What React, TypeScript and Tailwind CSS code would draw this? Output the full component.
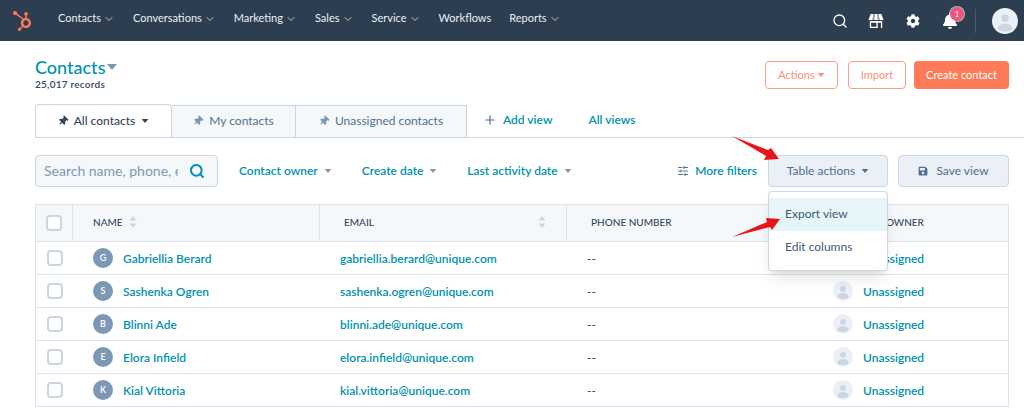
import { ChevronDown, Plus, Search, SlidersHorizontal } from 'lucide-react';
import { FaBell, FaCog, FaHubspot, FaSave, FaThumbtack } from 'react-icons/fa';

const navItems = [
  { label: 'Contacts', menu: true },
  { label: 'Conversations', menu: true },
  { label: 'Marketing', menu: true },
  { label: 'Sales', menu: true },
  { label: 'Service', menu: true },
  { label: 'Workflows', menu: false },
  { label: 'Reports', menu: true },
];

const contacts = [
  { name: 'Gabriellia Berard', email: 'gabriellia.berard@unique.com' },
  { name: 'Sashenka Ogren', email: 'sashenka.ogren@unique.com' },
  { name: 'Blinni Ade', email: 'blinni.ade@unique.com' },
  { name: 'Elora Infield', email: 'elora.infield@unique.com' },
  { name: 'Kial Vittoria', email: 'kial.vittoria@unique.com' },
];

function Caret({ className }: { className: string }) {
  return (
    <svg viewBox="0 0 10 6" className={className} fill="currentColor">
      <path d="M0 0h10L5 6z" />
    </svg>
  );
}

function SortArrows() {
  return (
    <svg viewBox="0 0 8 14" className="h-3.5 w-2 text-[#cbd6e2]" fill="currentColor">
      <path d="M4 1l3.500 4.500h-7zM4 13L.5 8.500h7z" />
    </svg>
  );
}

function UserAvatar({ className }: { className: string }) {
  return (
    <svg viewBox="0 0 24 24" className={className}>
      <circle cx="12" cy="12" r="12" fill="#eaf0f6" />
      <circle cx="12" cy="9.500" r="3.500" fill="#cbd6e2" />
      <path d="M5 19.500c.6-3.600 3.400-5 7-5s6.400 1.400 7 5a12 12 0 0 1-14 0z" fill="#cbd6e2" />
    </svg>
  );
}

function StoreIcon() {
  return (
    <svg viewBox="0 0 18 18" className="size-4 text-white" fill="currentColor">
      <path d="M3 1h3L5 8H.5zM7.500 1h3l.5 7H7zM12 1h3l2.500 7H13z" />
      <path d="M6 1h1.500L7 8H5zM10.500 1H12l1 7h-2z" opacity="0.5" />
      <path d="M2 9h14v8H2zM3.500 11v4.500h6V11zM11 11v6h3.500v-6z" fillRule="evenodd" />
    </svg>
  );
}

function Checkbox() {
  return <div className="size-4 rounded-sm border-2 border-[#cbd6e2] bg-white" />;
}

function Tab({ label, className }: { label: string; className: string }) {
  return (
    <div className={`flex h-8 items-center justify-center gap-1.5 border-r border-t border-[#cbd6e2] bg-[#f5f8fa] pb-0.5 text-[#516f90] ${className}`}>
      <FaThumbtack className="size-2.5 rotate-45 text-[#7c98b6]" />
      <span className="text-xs">{label}</span>
    </div>
  );
}

function Filter({ label }: { label: string }) {
  return (
    <button className="flex items-center gap-1.5 text-xs font-semibold text-[#0091ae]">
      {label}
      <Caret className="h-1 w-2 text-[#7c98b6]" />
    </button>
  );
}

export default function App() {
  return (
    <div className="relative h-[408px] w-[1024px] overflow-hidden bg-white font-['Lato',sans-serif] text-[#33475b]">
      <nav className="flex h-[41px] items-center bg-[#2d3e50] pl-3 pr-1.5 text-white">
        <FaHubspot className="size-5 text-[#ff7a59]" />
        <div className="ml-[26px] flex items-center gap-4.5 pb-1">
          {navItems.map((item) => (
            <div key={item.label} className="flex items-center gap-0.5 text-[11px] text-[#eaf0f6]">
              {item.label}
              {item.menu && <ChevronDown className="size-3" strokeWidth={1.5} />}
            </div>
          ))}
        </div>
        <div className="ml-auto flex items-center">
          <Search className="size-4" strokeWidth={2} />
          <div className="ml-5">
            <StoreIcon />
          </div>
          <FaCog className="ml-[22px] size-3.5" />
          <div className="relative ml-[22px]">
            <FaBell className="size-4" />
            <span className="absolute -right-1.5 -top-1.5 flex size-3.5 items-center justify-center rounded-full bg-[#f2547d] text-[8px] ring-1 ring-white/60">
              1
            </span>
          </div>
          <div className="ml-[17px] h-6 w-px bg-[#425b76]" />
          <UserAvatar className="ml-4 size-[26px]" />
        </div>
      </nav>

      <main className="pl-[35px] pr-[15px]">
        <header className="flex items-start justify-between pt-4">
          <div>
            <div className="flex items-center gap-0.5">
              <h1 className="text-lg font-medium leading-5 text-[#0091ae]">Contacts</h1>
              <Caret className="h-1.5 w-2.5 text-[#7c98b6]" />
            </div>
            <p className="text-[10px] font-semibold tracking-wide">25,017 records</p>
          </div>
          <div className="mt-1 flex items-center gap-2">
            <button className="mr-0.5 flex h-7 items-center gap-0.5 rounded-sm border border-[#ff9d85] px-3 text-[11px] text-[#ff8f73]">
              Actions
              <Caret className="h-1 w-2" />
            </button>
            <button className="h-7 rounded-sm border border-[#ff9d85] px-3 text-[11px] text-[#ff8f73]">Import</button>
            <button className="h-7 rounded-sm bg-[#ff7a59] px-3 text-[11px] text-white">Create contact</button>
          </div>
        </header>

        <div className="mt-3 -mr-[15px] flex items-end border-b border-[#cbd6e2]">
          <div className="flex h-[33px] w-[137px] items-center justify-center gap-1.5 rounded-t-sm border-x border-t border-[#cbd6e2] bg-white">
            <FaThumbtack className="size-2.5 rotate-45" />
            <span className="text-xs font-medium">All contacts</span>
            <Caret className="h-1 w-2" />
          </div>
          <Tab label="My contacts" className="w-[124px]" />
          <Tab label="Unassigned contacts" className="w-[171px]" />
          <div className="flex h-8 items-center gap-1.5 pb-0.5 pl-4 text-xs font-semibold text-[#0091ae]">
            <Plus className="size-3.5 text-[#516f90]" />
            Add view
          </div>
          <div className="ml-9 flex h-8 items-center pb-0.5 text-xs font-semibold text-[#0091ae]">All views</div>
        </div>

        <div className="mt-[17px] flex items-center">
          <div className="flex h-8 w-[183px] items-center justify-between rounded-sm border border-[#cbd6e2] bg-[#f5f8fa] pl-2 pr-3">
            <span className="w-[134px] overflow-hidden whitespace-nowrap text-sm text-[#7c98b6]">Search name, phone, email</span>
            <Search className="size-4 text-[#0091ae]" strokeWidth={3} />
          </div>
          <div className="ml-[21px] flex items-center gap-7.5">
            <Filter label="Contact owner" />
            <Filter label="Create date" />
            <Filter label="Last activity date" />
          </div>
          <div className="ml-auto flex items-center">
            <SlidersHorizontal className="size-3 text-[#516f90]" />
            <span className="ml-1.5 text-xs font-semibold text-[#0091ae]">More filters</span>
            <div className="relative ml-[11px]">
              <button className="flex h-8 w-[120px] items-center justify-center gap-1.5 rounded-sm border border-[#cbd6e2] bg-[#eaf0f6] text-xs text-[#506e91]">
                Table actions
                <Caret className="h-1 w-2" />
              </button>
              <div className="absolute left-0 top-full z-10 mt-1 w-[120px] rounded-sm border border-[#cbd6e2] bg-white py-1.5 text-xs text-[#425b76] shadow-lg">
                <div className="flex h-[33px] items-center bg-[#e5f5f8] px-4 pb-0.5">Export view</div>
                <div className="flex h-[33px] items-center px-4 pb-0.5">Edit columns</div>
              </div>
            </div>
            <button className="ml-2.5 flex h-8 w-[111px] items-center justify-center gap-2 rounded-sm border border-[#cbd6e2] bg-[#eaf0f6] text-xs text-[#506e91]">
              <FaSave className="size-2.5" />
              Save view
            </button>
          </div>
        </div>

        <div className="mt-[17px] border-x border-t border-[#dfe3eb]">
          <div className="grid h-[37px] grid-cols-[37px_247px_247px_1fr_199px] items-stretch border-b border-[#dfe3eb] bg-[#f5f8fa] text-[10px] font-medium">
            <div className="flex items-center justify-center border-r border-[#dfe3eb]">
              <Checkbox />
            </div>
            <div className="flex items-center gap-1.5 border-r border-[#dfe3eb] pb-0.5 pl-5">
              NAME
              <SortArrows />
            </div>
            <div className="flex items-center justify-between border-r border-[#dfe3eb] pb-0.5 pl-6 pr-5">
              EMAIL
              <SortArrows />
            </div>
            <div className="flex items-center pb-0.5 pl-6">PHONE NUMBER</div>
            <div className="flex items-center pb-0.5 pl-7">CONTACT OWNER</div>
          </div>
          {contacts.map((contact) => (
            <div
              key={contact.email}
              className="grid h-[33px] grid-cols-[37px_247px_247px_1fr_199px] items-center border-b border-[#dfe3eb] text-xs"
            >
              <div className="flex justify-center">
                <Checkbox />
              </div>
              <div className="flex items-center gap-2.5 pl-5">
                <span className="flex size-5 items-center justify-center rounded-full bg-[#7c98b6] text-[9px] font-semibold text-white">
                  {contact.name[0]}
                </span>
                <span className="pt-0.5 font-semibold text-[#0091ae]">{contact.name}</span>
              </div>
              <div className="pl-5 pt-0.5 font-semibold text-[#0091ae]">{contact.email}</div>
              <div className="pl-5 pt-0.5">--</div>
              <div className="flex items-center gap-2.5 pl-6">
                <UserAvatar className="size-5" />
                <span className="pt-0.5 font-semibold text-[#0091ae]">Unassigned</span>
              </div>
            </div>
          ))}
        </div>
      </main>

      {/* annotation arrows */}
      <svg viewBox="0 0 1024 408" className="pointer-events-none absolute inset-0 z-20 size-full">
        <path d="M732 136l36 14 3-2 8 11-15 1 2-4z" fill="#e8141c" />
        <path d="M732 237l35-15-1-4 14 1-8 11-2-3z" fill="#e8141c" />
      </svg>
    </div>
  );
}
